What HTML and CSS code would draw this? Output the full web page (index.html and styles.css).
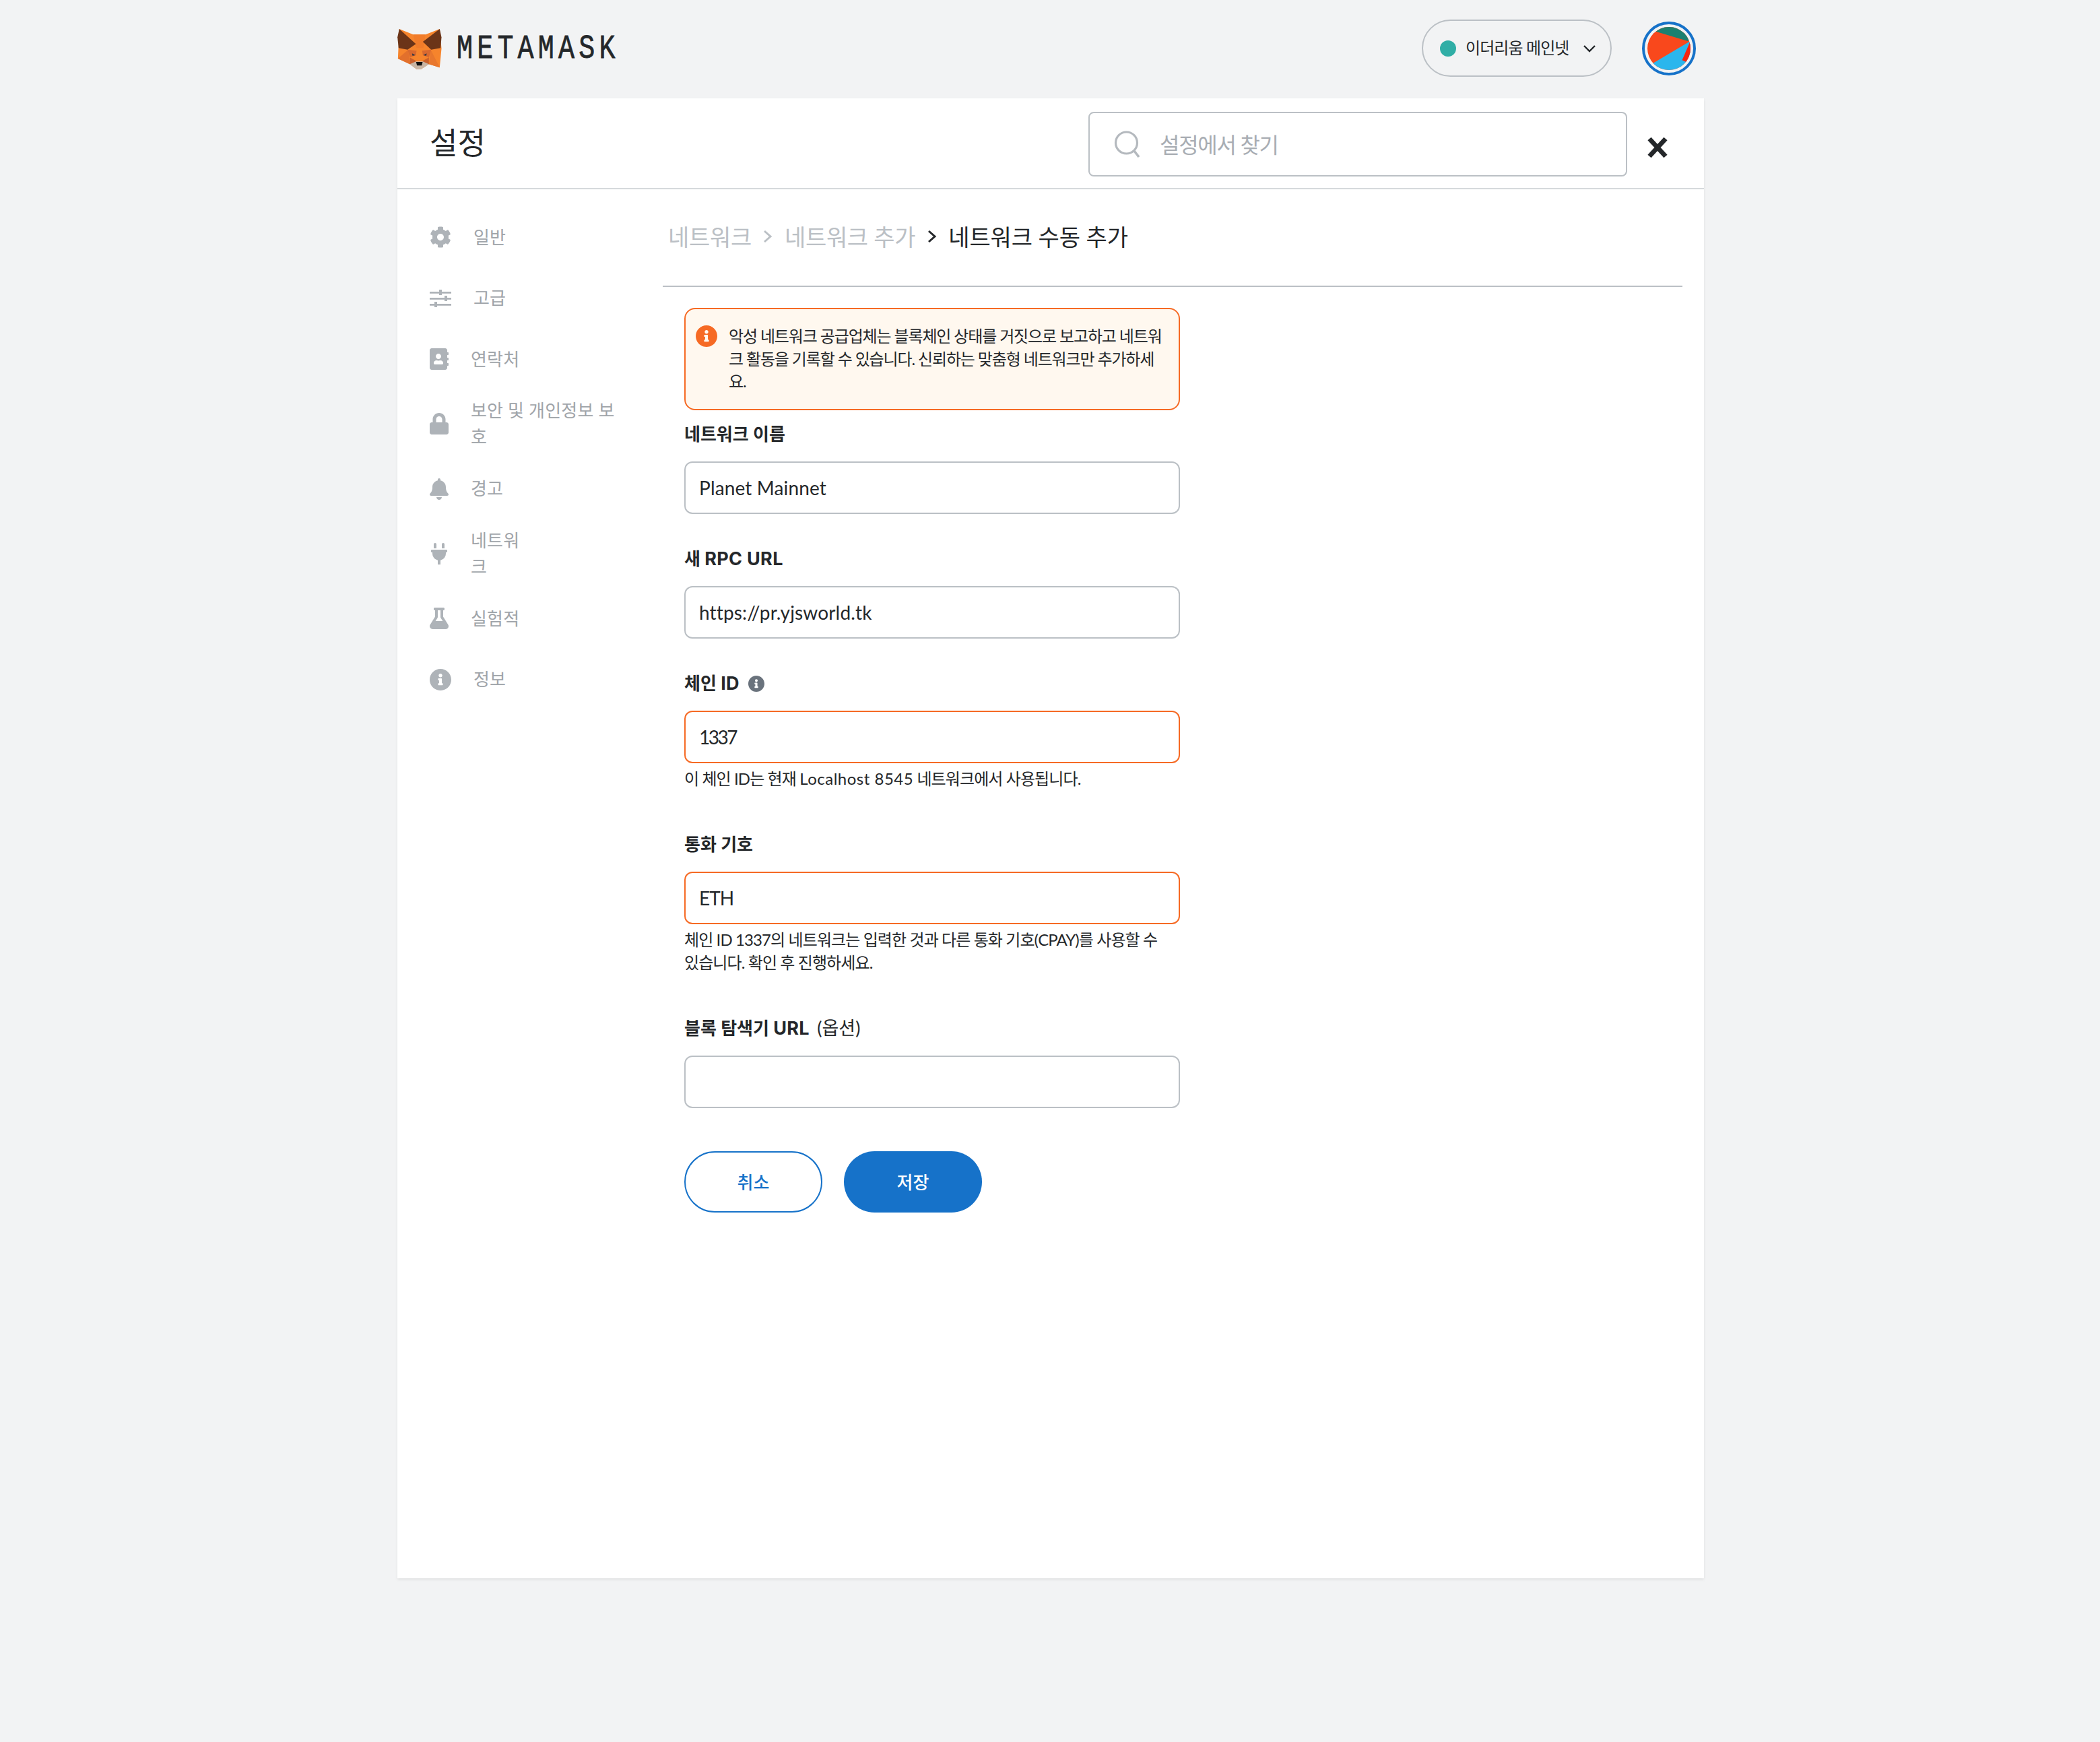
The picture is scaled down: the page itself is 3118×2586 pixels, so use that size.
FILE: index.html
```html
<!DOCTYPE html>
<html lang="ko">
<head>
<meta charset="utf-8">
<title>MetaMask 설정</title>
<link rel="stylesheet" href="styles.css">
</head>
<body>
<div class="page">
  <header class="topbar">
    <div class="brand">
      <svg class="fox" viewBox="30 33 197 180">
        <polygon fill="#f6842c" points="38,33 100,58 155,58 218,33 226,120 218,205 170,190 135,212 115,212 85,190 32,165"/>
        <polygon fill="#e2702c" points="32,165 78,125 85,190"/>
        <polygon fill="#e8772d" points="218,205 178,125 170,190"/>
        <polygon fill="#f17c2a" points="100,58 155,58 145,118 115,118"/>
        <polygon fill="#d9692f" points="75,125 115,130 112,150 85,160"/>
        <polygon fill="#d9692f" points="180,125 140,130 143,150 170,160"/>
        <polygon fill="#c9602c" points="85,160 112,175 115,190 85,190"/>
        <polygon fill="#c9602c" points="170,160 143,175 140,190 170,190"/>
        <polygon fill="#6b3418" points="38,33 112,100 75,125 35,118 30,70"/>
        <polygon fill="#6b3418" points="218,33 143,90 180,125 222,118 226,70"/>
        <polygon fill="#233447" points="95,142 110,150 97,152"/>
        <polygon fill="#233447" points="160,142 145,150 158,152"/>
        <polygon fill="#c8b5a4" points="85,190 112,178 143,178 170,190 135,212 115,212"/>
        <polygon fill="#111111" points="113,180 142,180 138,196 117,196"/>
      </svg>
      <span class="wordmark">METAMASK</span>
    </div>
    <div class="top-actions">
      <div class="network-pill">
        <span class="network-dot"></span>
        <span class="network-name">이더리움 메인넷</span>
        <svg class="chevron" viewBox="0 0 20 12"><path d="M2 2l8 8 8-8" fill="none" stroke="#24272a" stroke-width="2.4"/></svg>
      </div>
      <div class="avatar">
        <svg class="avatar-art" viewBox="48 57 190 190">
          <clipPath id="pie"><circle cx="143" cy="152" r="95"/></clipPath>
          <g clip-path="url(#pie)">
            <rect x="40" y="50" width="210" height="210" fill="#f9481c"/>
            <polygon fill="#1c8070" points="85,77 228,120 250,40 70,40"/>
            <polygon fill="#2ab6ed" points="72,217 236,120 250,270 50,270"/>
            <polygon fill="#f6230f" points="236,122 201,203 222,213 250,190 250,122"/>
          </g>
        </svg>
      </div>
    </div>
  </header>

  <main class="card">
    <div class="card-head">
      <h1 class="title">설정</h1>
      <div class="search">
        <svg class="search-icon" viewBox="0 0 40 40"><circle cx="18.500" cy="18" r="16" fill="none" stroke="#b4b9be" stroke-width="3.200"/><path d="M30 30l7 9" stroke="#b4b9be" stroke-width="3.600" fill="none"/></svg>
        <span class="search-text">설정에서 찾기</span>
      </div>
      <svg class="close" viewBox="0 0 32 32"><path d="M4 3l24 26M28 3L4 29" stroke="#24272a" stroke-width="7" fill="none"/></svg>
    </div>

    <div class="card-body">
      <nav class="sidebar">
        <div class="nav-item">
          <svg class="ico ico-wide" viewBox="0 0 512 512"><path d="M487.4 315.7l-42.6-24.6c4.3-23.2 4.3-47 0-70.2l42.6-24.6c4.9-2.8 7.1-8.6 5.5-14-11.1-35.6-30-67.8-54.7-94.6-3.8-4.1-10-5.1-14.8-2.3L380.8 110c-17.9-15.4-38.5-27.3-60.8-35.1V25.800c0-5.600-3.900-10.500-9.400-11.700-36.700-8.200-74.300-7.800-109.200 0-5.500 1.200-9.400 6.100-9.400 11.700V75c-22.200 7.900-42.800 19.800-60.800 35.100L88.700 85.500c-4.900-2.800-11-1.900-14.800 2.300-24.700 26.700-43.600 58.900-54.700 94.600-1.700 5.400.6 11.200 5.500 14L67.300 221c-4.300 23.200-4.300 47 0 70.200l-42.600 24.600c-4.900 2.800-7.100 8.600-5.500 14 11.100 35.600 30 67.800 54.700 94.600 3.800 4.100 10 5.100 14.800 2.300l42.600-24.600c17.900 15.400 38.500 27.300 60.800 35.100v49.200c0 5.600 3.900 10.500 9.400 11.700 36.700 8.200 74.300 7.800 109.200 0 5.500-1.200 9.400-6.100 9.400-11.700v-49.200c22.200-7.900 42.800-19.800 60.800-35.100l42.600 24.600c4.900 2.800 11 1.900 14.800-2.300 24.700-26.700 43.600-58.900 54.700-94.600 1.500-5.500-.7-11.300-5.600-14.100zM256 336c-44.100 0-80-35.900-80-80s35.900-80 80-80 80 35.900 80 80-35.900 80-80 80z"/></svg>
          <span>일반</span>
        </div>
        <div class="nav-item">
          <svg class="ico ico-wide" viewBox="0 0 32 32"><path d="M0 6h32v2.800H0zM0 15h32v2.800H0zM0 24h32v2.800H0z"/><path d="M14 3h4v8h-4zM22 12h4v8h-4zM7 21h4v8H7z"/></svg>
          <span>고급</span>
        </div>
        <div class="nav-item">
          <svg class="ico" viewBox="0 0 448 512"><path d="M436 160c6.600 0 12-5.400 12-12v-40c0-6.600-5.400-12-12-12h-20V48c0-26.500-21.500-48-48-48H48C21.500 0 0 21.500 0 48v416c0 26.500 21.500 48 48 48h320c26.500 0 48-21.500 48-48v-48h20c6.600 0 12-5.400 12-12v-40c0-6.600-5.400-12-12-12h-20v-64h20c6.600 0 12-5.400 12-12v-40c0-6.600-5.400-12-12-12h-20v-64h20zm-228-32c35.300 0 64 28.700 64 64s-28.700 64-64 64-64-28.700-64-64 28.700-64 64-64zm112 236.800c0 10.600-10 19.200-22.400 19.200H118.400C106 384 96 375.400 96 364.800v-19.200c0-31.800 30.100-57.600 67.200-57.600h5c12.300 5.100 25.700 8 39.800 8s27.600-2.900 39.800-8h5c37.100 0 67.200 25.800 67.200 57.600v19.200z"/></svg>
          <span>연락처</span>
        </div>
        <div class="nav-item">
          <svg class="ico" viewBox="0 0 448 512"><path d="M400 224h-24v-72C376 68.200 307.800 0 224 0S72 68.200 72 152v72H48c-26.500 0-48 21.500-48 48v192c0 26.500 21.500 48 48 48h352c26.500 0 48-21.500 48-48V272c0-26.500-21.500-48-48-48zm-104 0H152v-72c0-39.700 32.300-72 72-72s72 32.300 72 72v72z"/></svg>
          <span>보안 및 개인정보 보<br>호</span>
        </div>
        <div class="nav-item">
          <svg class="ico" viewBox="0 0 448 512"><path d="M224 512c35.320 0 63.970-28.650 63.970-64H160.030c0 35.350 28.650 64 63.970 64zm215.390-149.710c-19.320-20.760-55.470-51.990-55.470-154.290 0-77.700-54.480-139.900-127.940-155.160V32c0-17.670-14.320-32-31.980-32s-31.980 14.330-31.980 32v20.840C118.560 68.100 64.080 130.300 64.080 208c0 102.300-36.150 133.530-55.470 154.290-6 6.450-8.660 14.160-8.610 21.710.11 16.400 12.980 32 32.100 32h383.800c19.120 0 32-15.600 32.100-32 .05-7.550-2.610-15.270-8.610-21.710z"/></svg>
          <span>경고</span>
        </div>
        <div class="nav-item">
          <svg class="ico" viewBox="-32 0 448 512"><path d="M320 32a32 32 0 0 0-64 0v96h64zm48 128H16a16 16 0 0 0-16 16v32a16 16 0 0 0 16 16h16v32a160.070 160.070 0 0 0 128 156.800V512h64v-99.200A160.070 160.070 0 0 0 352 256v-32h16a16 16 0 0 0 16-16v-32a16 16 0 0 0-16-16zM128 32a32 32 0 0 0-64 0v96h64z"/></svg>
          <span>네트워<br>크</span>
        </div>
        <div class="nav-item">
          <svg class="ico" viewBox="0 0 448 512"><path d="M437.200 403.500L320 215V64h8c13.300 0 24-10.700 24-24V24c0-13.300-10.700-24-24-24H120c-13.300 0-24 10.700-24 24v16c0 13.300 10.700 24 24 24h8v151L10.800 403.500C-18.500 450.600 15.200 512 70.900 512h306.200c55.800 0 89.400-61.500 60.100-108.500zM137.900 320l48.200-77.600c3.700-5.200 5.800-11.600 5.800-18.400V64h64v160c0 6.900 2.200 13.200 5.800 18.400l48.200 77.600h-172z"/></svg>
          <span>실험적</span>
        </div>
        <div class="nav-item">
          <svg class="ico ico-wide" viewBox="8 8 496 496"><path d="M256 8C119.043 8 8 119.083 8 256c0 136.997 111.043 248 248 248s248-111.003 248-248C504 119.083 392.957 8 256 8zm0 110c23.196 0 42 18.804 42 42s-18.804 42-42 42-42-18.804-42-42 18.804-42 42-42zm56 254c0 6.627-5.373 12-12 12h-88c-6.627 0-12-5.373-12-12v-24c0-6.627 5.373-12 12-12h12v-64h-12c-6.627 0-12-5.373-12-12v-24c0-6.627 5.373-12 12-12h64c6.627 0 12 5.373 12 12v100h12c6.627 0 12 5.373 12 12v24z"/></svg>
          <span>정보</span>
        </div>
      </nav>

      <section class="content">
        <div class="crumbs">
          <span class="crumb-muted">네트워크</span>
          <svg class="crumb-sep" viewBox="0 0 14 20"><path d="M2 2l9 8-9 8" fill="none" stroke="#bbc0c5" stroke-width="3"/></svg>
          <span class="crumb-muted">네트워크 추가</span>
          <svg class="crumb-sep" viewBox="0 0 14 20"><path d="M2 2l9 8-9 8" fill="none" stroke="#24272a" stroke-width="3"/></svg>
          <span class="crumb-current">네트워크 수동 추가</span>
        </div>

        <form class="form">
          <div class="warning">
            <svg class="warn-ico" viewBox="8 8 496 496"><path d="M256 8C119.043 8 8 119.083 8 256c0 136.997 111.043 248 248 248s248-111.003 248-248C504 119.083 392.957 8 256 8zm0 110c23.196 0 42 18.804 42 42s-18.804 42-42 42-42-18.804-42-42 18.804-42 42-42zm56 254c0 6.627-5.373 12-12 12h-88c-6.627 0-12-5.373-12-12v-24c0-6.627 5.373-12 12-12h12v-64h-12c-6.627 0-12-5.373-12-12v-24c0-6.627 5.373-12 12-12h64c6.627 0 12 5.373 12 12v100h12c6.627 0 12 5.373 12 12v24z"/></svg>
            <p class="warn-text">악성 네트워크 공급업체는 블록체인 상태를 거짓으로 보고하고 네트워<br>크 활동을 기록할 수 있습니다. 신뢰하는 맞춤형 네트워크만 추가하세<br>요.</p>
          </div>

          <div class="field">
            <div class="label">네트워크 이름</div>
            <div class="input">Planet Mainnet</div>
          </div>
          <div class="field">
            <div class="label">새 <span class="latin-bold">RPC URL</span></div>
            <div class="input">https://pr.yjsworld.tk</div>
          </div>
          <div class="field field-hint">
            <div class="label">체인 <span class="latin-bold">ID</span><svg class="label-ico" viewBox="8 8 496 496"><path d="M256 8C119.043 8 8 119.083 8 256c0 136.997 111.043 248 248 248s248-111.003 248-248C504 119.083 392.957 8 256 8zm0 110c23.196 0 42 18.804 42 42s-18.804 42-42 42-42-18.804-42-42 18.804-42 42-42zm56 254c0 6.627-5.373 12-12 12h-88c-6.627 0-12-5.373-12-12v-24c0-6.627 5.373-12 12-12h12v-64h-12c-6.627 0-12-5.373-12-12v-24c0-6.627 5.373-12 12-12h64c6.627 0 12 5.373 12 12v100h12c6.627 0 12 5.373 12 12v24z"/></svg></div>
            <div class="input input-warn input-tight">1337</div>
            <p class="hint">이 체인 ID는 현재 <span class="latin">Localhost 8545</span> 네트워크에서 사용됩니다.</p>
          </div>
          <div class="field field-hint">
            <div class="label">통화 기호</div>
            <div class="input input-warn input-tight-sm">ETH</div>
            <p class="hint">체인 ID 1337의 네트워크는 입력한 것과 다른 통화 기호(CPAY)를 사용할 수<br>있습니다. 확인 후 진행하세요.</p>
          </div>
          <div class="field">
            <div class="label">블록 탐색기 <span class="latin-bold">URL</span> <span class="label-light">(옵션)</span></div>
            <div class="input"></div>
          </div>

          <div class="actions">
            <div class="btn btn-outline">취소</div>
            <div class="btn btn-primary">저장</div>
          </div>
        </form>
      </section>
    </div>
  </main>
</div>
</body>
</html>
```

FILE: styles.css
```css
* { box-sizing: border-box; }

html, body {
  margin: 0;
  padding: 0;
  background: #f2f3f4;
}

body {
  font-family: "Lato", "Noto Sans CJK KR", sans-serif;
  color: #24272a;
  padding-left: 2px;
}

.page {
  width: 1940px;
  margin: 0 auto;
  padding-bottom: 243px;
}

/* top bar */
.topbar {
  height: 146px;
  display: flex;
  align-items: center;
  justify-content: space-between;
  padding-right: 12px;
  padding-bottom: 3px;
}

.brand {
  display: flex;
  align-items: center;
  gap: 22px;
  margin-top: 3px;
}

.fox {
  width: 66px;
  height: 60px;
  display: block;
}

.wordmark {
  font-family: "Liberation Mono", monospace;
  font-size: 40px;
  line-height: 1;
  letter-spacing: 6.2px;
  color: #24272a;
  transform: scaleY(1.26);
  -webkit-text-stroke: 0.6px #24272a;
}

.top-actions {
  display: flex;
  align-items: center;
  gap: 45px;
}

.network-pill {
  width: 282px;
  height: 85px;
  border: 2px solid #bbc0c5;
  border-radius: 43px;
  display: flex;
  align-items: center;
  padding-left: 25px;
}

.network-dot {
  width: 24px;
  height: 24px;
  border-radius: 50%;
  background: #30aea6;
  flex: none;
}

.network-name {
  margin-left: 14px;
  padding-bottom: 5px;
  font-size: 24px;
  letter-spacing: -0.9px;
  white-space: nowrap;
  color: #24272a;
}

.chevron {
  width: 20px;
  height: 12px;
  margin-left: 20px;
  flex: none;
}

.avatar {
  width: 80px;
  height: 80px;
  border: 4px solid #1672c9;
  border-radius: 50%;
  display: flex;
  align-items: center;
  justify-content: center;
}

.avatar-art {
  width: 64px;
  height: 64px;
  display: block;
}

/* card */
.card {
  background: #fff;
  height: 2197px;
  box-shadow: 0 2px 4px rgba(0, 0, 0, 0.08);
}

.card-head {
  height: 135px;
  border-bottom: 2px solid #d6d9dc;
  display: flex;
  align-items: flex-start;
  padding-left: 48px;
}

.title {
  margin: 0;
  font-size: 45px;
  font-weight: 400;
  line-height: 60px;
  padding-top: 36px;
  color: #24272a;
  flex: 1;
}

.search {
  width: 800px;
  height: 96px;
  margin-top: 20px;
  border: 2px solid #bbc0c5;
  border-radius: 8px;
  display: flex;
  align-items: center;
  padding-left: 36px;
}

.search-icon {
  width: 40px;
  height: 40px;
  flex: none;
}

.search-text {
  margin-left: 28px;
  padding-bottom: 3px;
  font-size: 32px;
  letter-spacing: -1.3px;
  color: #a8adb3;
}

.close {
  width: 34px;
  height: 32px;
  margin: 57px 52px 0 28px;
  flex: none;
}

.card-body {
  display: grid;
  grid-template-columns: 394px 1514px;
}

/* sidebar */
.sidebar {
  padding: 38px 0 0 48px;
}

.nav-item {
  min-height: 66.300px;
  margin-bottom: 24.200px;
  display: flex;
  align-items: center;
  font-size: 26px;
  line-height: 39px;
  letter-spacing: 0.2px;
  color: #9fa4a9;
  white-space: nowrap;
}

.ico {
  width: 28px;
  height: 32px;
  margin-right: 33px;
  flex: none;
  fill: #aeb3b8;
}

.ico-wide {
  width: 32px;
}

/* content */
.crumbs {
  height: 145px;
  border-bottom: 2px solid #bbc0c5;
  display: flex;
  align-items: center;
  padding: 0 0 4px 8px;
  font-size: 34px;
  gap: 17.500px;
  letter-spacing: -0.3px;
}

.crumb-muted { color: #bbc0c5; }
.crumb-current { color: #24272a; letter-spacing: -0.1px; }

.crumb-sep {
  width: 14px;
  height: 20px;
  flex: none;
}

.form {
  width: 768px;
  padding: 31px 0 0 32px;
}

.warning {
  width: 736px;
  height: 152px;
  border: 2px solid #f66a24;
  border-radius: 16px;
  background: #fff8ef;
  display: flex;
  align-items: flex-start;
  padding: 24px 0 0 15px;
  margin-bottom: 14px;
}

.warn-ico {
  width: 32px;
  height: 32px;
  flex: none;
  fill: #f66a24;
}

.warn-text {
  margin: -1px 0 0 17px;
  font-size: 24px;
  line-height: 33.500px;
  letter-spacing: -1.130px;
  white-space: nowrap;
  color: #24272a;
}

.field {
  margin-bottom: 45px;
}

.field-hint {
  margin-bottom: 59px;
}

.label {
  height: 40px;
  margin-bottom: 22px;
  font-size: 26px;
  font-weight: 700;
  line-height: 42px;
  letter-spacing: 0;
  white-space: nowrap;
  color: #24272a;
}

.latin-bold {
  font-family: "Inter", sans-serif;
  font-size: 27px;
  letter-spacing: 0.3px;
}

.label-light {
  font-weight: 400;
  font-size: 27px;
  margin-left: 5px;
}

.label-ico {
  width: 24px;
  height: 24px;
  margin-left: 13px;
  vertical-align: -3px;
  fill: #6a737d;
}

.input {
  width: 736px;
  height: 78px;
  border: 2px solid #bbc0c5;
  border-radius: 12px;
  padding: 0 20px;
  font-size: 28px;
  line-height: 74px;
  letter-spacing: 0.15px;
  color: #24272a;
}

.input-warn {
  border-color: #f66a24;
}

.input-tight {
  letter-spacing: -2.500px;
}

.input-tight-sm {
  letter-spacing: -1px;
}

.hint {
  margin: 6px 0 0;
  font-size: 24px;
  line-height: 34px;
  letter-spacing: -0.9px;
  white-space: nowrap;
  color: #24272a;
}

.latin {
  letter-spacing: 0.5px;
}

.actions {
  display: flex;
  gap: 32px;
  margin-top: 64px;
}

.btn {
  width: 205px;
  height: 91px;
  border-radius: 46px;
  display: flex;
  align-items: center;
  justify-content: center;
  padding-bottom: 2px;
  font-size: 26px;
  font-weight: 500;
}

.btn-outline {
  border: 2px solid #1672c9;
  color: #1672c9;
  background: #fff;
}

.btn-primary {
  background: #1672c9;
  color: #fff;
}
```
